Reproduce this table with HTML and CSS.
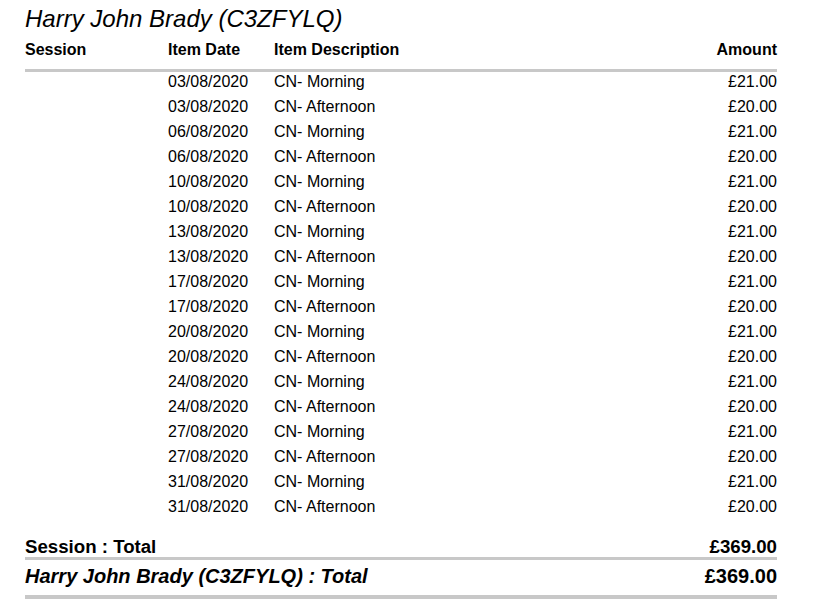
FILE: index.html
```html
<!DOCTYPE html>
<html>
<head>
<meta charset="utf-8">
<link rel="stylesheet" href="styles.css">
</head>
<body>
<div class="report">
  <h1 class="title">Harry John Brady (C3ZFYLQ)</h1>
  <table class="items">
    <thead>
      <tr>
        <th class="c-session">Session</th>
        <th class="c-date">Item Date</th>
        <th class="c-desc">Item Description</th>
        <th class="c-amt">Amount</th>
      </tr>
    </thead>
    <tbody>
      <tr><td></td><td>03/08/2020</td><td>CN- Morning</td><td class="c-amt">£21.00</td></tr>
      <tr><td></td><td>03/08/2020</td><td>CN- Afternoon</td><td class="c-amt">£20.00</td></tr>
      <tr><td></td><td>06/08/2020</td><td>CN- Morning</td><td class="c-amt">£21.00</td></tr>
      <tr><td></td><td>06/08/2020</td><td>CN- Afternoon</td><td class="c-amt">£20.00</td></tr>
      <tr><td></td><td>10/08/2020</td><td>CN- Morning</td><td class="c-amt">£21.00</td></tr>
      <tr><td></td><td>10/08/2020</td><td>CN- Afternoon</td><td class="c-amt">£20.00</td></tr>
      <tr><td></td><td>13/08/2020</td><td>CN- Morning</td><td class="c-amt">£21.00</td></tr>
      <tr><td></td><td>13/08/2020</td><td>CN- Afternoon</td><td class="c-amt">£20.00</td></tr>
      <tr><td></td><td>17/08/2020</td><td>CN- Morning</td><td class="c-amt">£21.00</td></tr>
      <tr><td></td><td>17/08/2020</td><td>CN- Afternoon</td><td class="c-amt">£20.00</td></tr>
      <tr><td></td><td>20/08/2020</td><td>CN- Morning</td><td class="c-amt">£21.00</td></tr>
      <tr><td></td><td>20/08/2020</td><td>CN- Afternoon</td><td class="c-amt">£20.00</td></tr>
      <tr><td></td><td>24/08/2020</td><td>CN- Morning</td><td class="c-amt">£21.00</td></tr>
      <tr><td></td><td>24/08/2020</td><td>CN- Afternoon</td><td class="c-amt">£20.00</td></tr>
      <tr><td></td><td>27/08/2020</td><td>CN- Morning</td><td class="c-amt">£21.00</td></tr>
      <tr><td></td><td>27/08/2020</td><td>CN- Afternoon</td><td class="c-amt">£20.00</td></tr>
      <tr><td></td><td>31/08/2020</td><td>CN- Morning</td><td class="c-amt">£21.00</td></tr>
      <tr><td></td><td>31/08/2020</td><td>CN- Afternoon</td><td class="c-amt">£20.00</td></tr>
    </tbody>
    <tfoot>
      <tr class="session-total">
        <td colspan="3">Session : Total</td>
        <td class="c-amt">£369.00</td>
      </tr>
      <tr class="grand-total">
        <td colspan="3"><em>Harry John Brady (C3ZFYLQ) : Total</em></td>
        <td class="c-amt">£369.00</td>
      </tr>
    </tfoot>
  </table>
</div>
</body>
</html>
```

FILE: styles.css
```css
html, body {
  margin: 0;
  padding: 0;
  background: #ffffff;
}

body {
  font-family: "Liberation Sans", Arial, sans-serif;
  color: #000000;
}

.report {
  padding: 6px 0 0 25px;
  width: 752px;
}

.title {
  margin: 0;
  font-size: 24px;
  font-weight: normal;
  font-style: italic;
  line-height: 26px;
}

.items {
  border-collapse: collapse;
  width: 752px;
  margin-top: 9px;
  font-size: 16px;
}

.items th,
.items td {
  padding: 0;
  text-align: left;
  vertical-align: top;
  white-space: nowrap;
}

.items thead th {
  font-size: 16px;
  font-weight: bold;
  line-height: 18px;
  padding-bottom: 10px;
  border-bottom: 3px solid #c8c8c8;
}

.c-session { width: 143px; }
.c-date { width: 106px; }
.items .c-amt { text-align: right; }

.items tbody td {
  line-height: 18px;
  padding-top: 1px;
  padding-bottom: 6px;
}

.items tfoot td {
  font-weight: bold;
}

.session-total td {
  font-size: 18.67px;
  line-height: 21px;
  padding-top: 14px;
  border-bottom: 3px solid #c8c8c8;
}

.grand-total td {
  font-size: 20px;
  line-height: 23px;
  padding-top: 5px;
  padding-bottom: 7px;
  border-bottom: 4px solid #c8c8c8;
}

.grand-total em {
  font-style: italic;
}
```
